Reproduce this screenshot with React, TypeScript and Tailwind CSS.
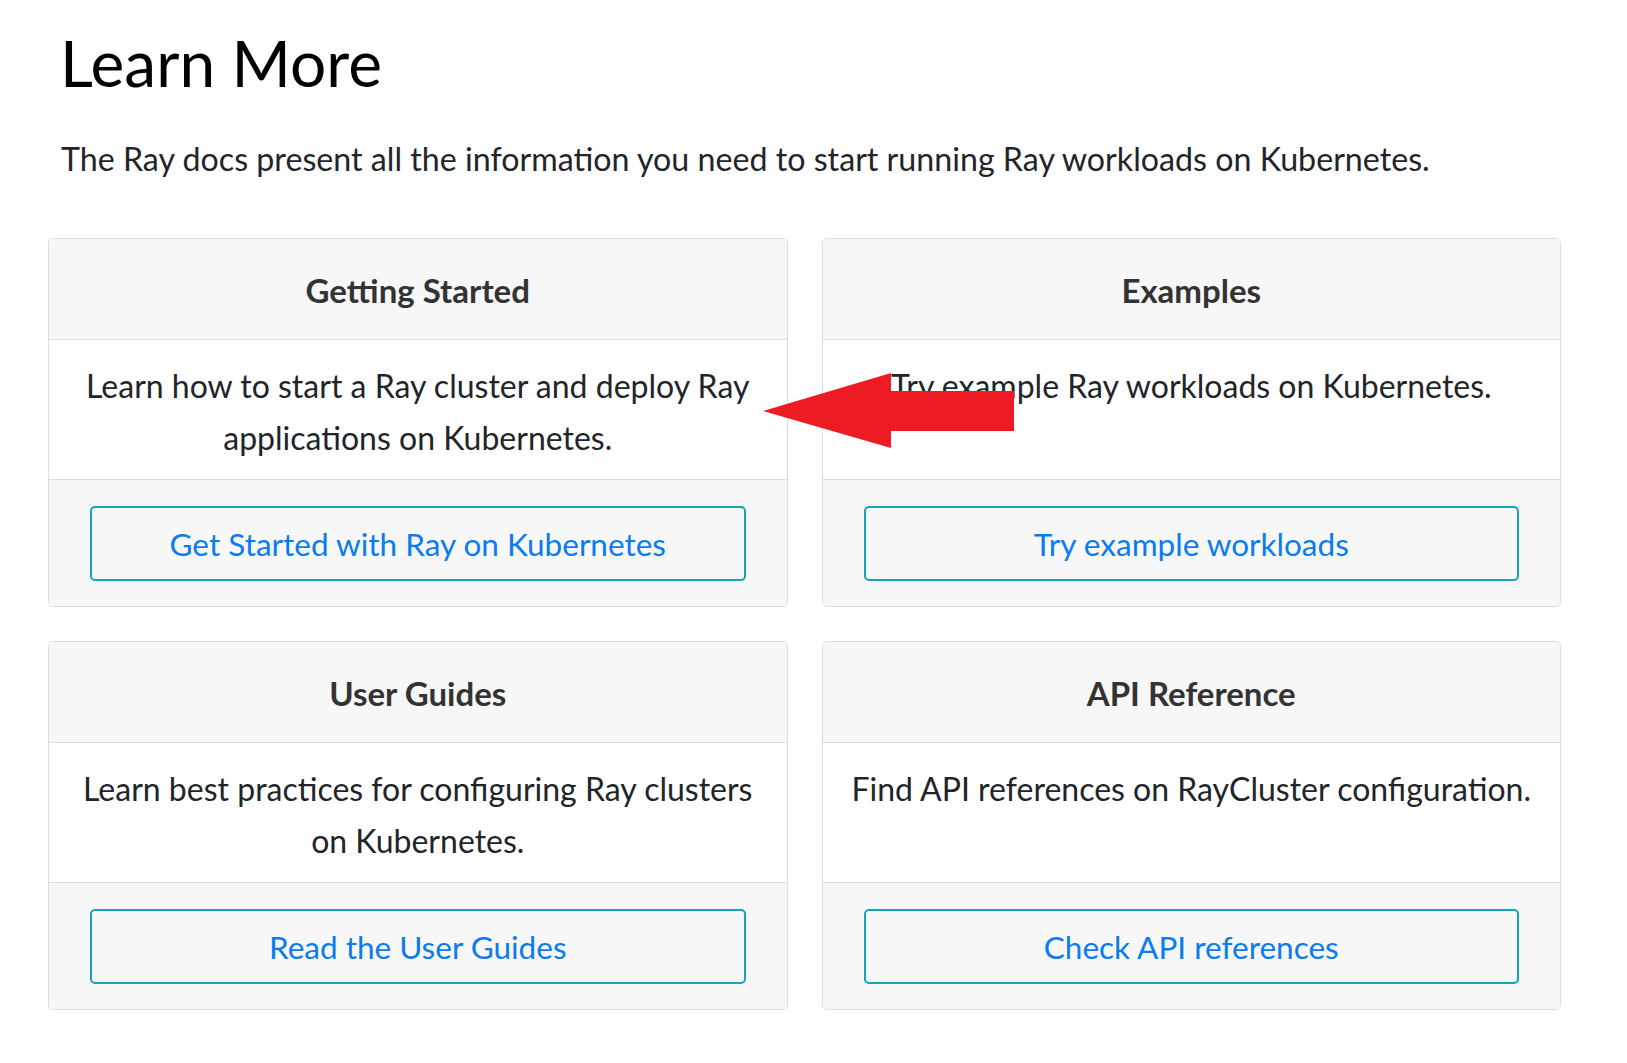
const cards = [
  {
    title: "Getting Started",
    text: "Learn how to start a Ray cluster and deploy Ray applications on Kubernetes.",
    cta: "Get Started with Ray on Kubernetes",
  },
  {
    title: "Examples",
    text: "Try example Ray workloads on Kubernetes.",
    cta: "Try example workloads",
  },
  {
    title: "User Guides",
    text: "Learn best practices for configuring Ray clusters on Kubernetes.",
    cta: "Read the User Guides",
  },
  {
    title: "API Reference",
    text: "Find API references on RayCluster configuration.",
    cta: "Check API references",
  },
];

function Card({ title, text, cta }: { title: string; text: string; cta: string }) {
  return (
    <div className="flex flex-col rounded-[5px] border border-[#dddddd] overflow-hidden">
      <div className="h-[101px] pt-[2px] flex items-center justify-center bg-[#f7f7f7] border-b border-[#dddddd]">
        <h3 className="text-[33px] leading-[40px] font-bold text-[#333333]">{title}</h3>
      </div>
      <div className="flex-1 bg-white px-[24px] pt-[20px] pb-[15px] border-b border-[#dddddd]">
        <p className="text-[32px] leading-[52px] text-center text-[#212529]">{text}</p>
      </div>
      <div className="bg-[#f7f7f7] px-[41px] pt-[26px] pb-[25px]">
        <a
          href="#"
          className="h-[75px] flex items-center justify-center rounded-[5px] border-2 border-[#17a2b8] text-[31.5px] leading-[38px] text-[#0a7bf0]"
        >
          {cta}
        </a>
      </div>
    </div>
  );
}

export default function App() {
  return (
    <div className="relative min-h-screen bg-white pl-[48px] pt-[24px] pb-[40px] font-['Lato',sans-serif]">
      <h1 className="pl-[12px] text-[64px] leading-[77px] font-normal text-black">Learn More</h1>
      <p className="pl-[13px] mt-[34px] text-[32.2px] leading-[48px] text-[#212529]">
        The Ray docs present all the information you need to start running Ray workloads on Kubernetes.
      </p>

      <div className="mt-[55px] w-[1513px] grid grid-cols-2 gap-x-[34px] gap-y-[34px]">
        {cards.map((c) => (
          <Card key={c.title} {...c} />
        ))}
      </div>

      {/* red annotation arrow */}
      <svg
        className="absolute left-0 top-0 pointer-events-none"
        width="1627"
        height="1063"
        viewBox="0 0 1627 1063"
      >
        <polygon
          points="763,411 891,373 891,391 1014,391 1014,431 891,431 891,448"
          fill="#ed1c24"
        />
      </svg>
    </div>
  );
}
